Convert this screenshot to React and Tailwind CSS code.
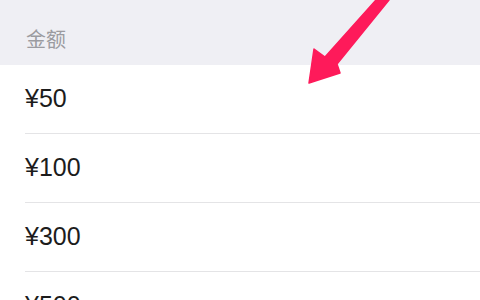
import React from 'react'

const amounts = ['¥50', '¥100', '¥300', '¥500']

function Arrow(){
  return (
    <svg className="absolute left-0 top-0 pointer-events-none" width="480" height="300" viewBox="0 0 480 300">
      <polygon
        points="376,0 389,0 337,64 340,73 309,83 314,49 325,57"
        fill="#fe1a5a"
        stroke="#fe1a5a"
        strokeWidth="1.5"
        strokeLinejoin="round"
      />
    </svg>
  )
}

export default function App(){
  return (
    <div className="relative w-[480px] h-[300px] overflow-hidden bg-white" style={{ fontFamily: '"Liberation Sans", "Noto Sans CJK SC", sans-serif' }}>
      <div className="h-[65px] bg-[#efeff4] flex items-end pl-[26px] pb-[15px]">
        <span className="text-[20px] leading-none text-[#9b9ba0]">金额</span>
      </div>
      {amounts.map((a)=>(
        <div key={a} className="pl-[25px]">
          <div className="h-[69px] flex items-center border-b border-[#e4e4e6] text-[25px] text-[#1c1c1c]">
            {a}
          </div>
        </div>
      ))}
      <Arrow />
    </div>
  )
}
